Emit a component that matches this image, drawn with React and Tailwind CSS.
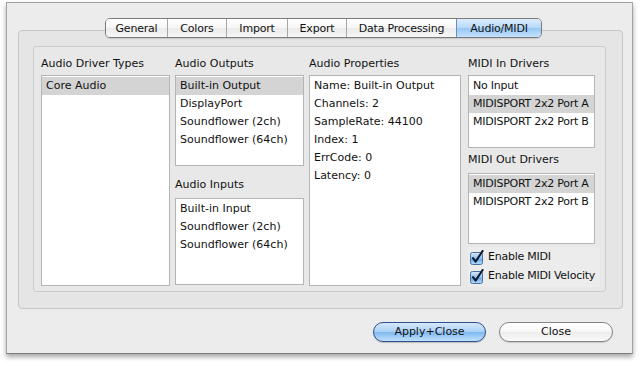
import React from "react";

const tabs = [
  ["General", 62],
  ["Colors", 59],
  ["Import", 61],
  ["Export", 59],
  ["Data Processing", 110],
  ["Audio/MIDI", 85],
];

function ListBox({ items, selected, className }) {
  return (
    <div className={"bg-white border border-[#b5b5b5] pt-[1px] overflow-hidden " + className}>
      {items.map((it, i) => (
        <div
          key={i}
          className={
            "h-[18px] leading-[18px] pl-[4px] whitespace-nowrap " +
            (i === selected ? "bg-[#d4d4d4]" : "")
          }
        >
          {it}
        </div>
      ))}
    </div>
  );
}

function Label({ children, className = "" }) {
  return (
    <div className={"h-[16px] leading-[16px] whitespace-nowrap " + className}>
      {children}
    </div>
  );
}

function Check() {
  return (
    <svg width="14" height="15" viewBox="0 0 14 15" className="shrink-0">
      <defs>
        <linearGradient id="cbg" x1="0" y1="0" x2="0" y2="1">
          <stop offset="0" stopColor="#d6eafd" />
          <stop offset="0.5" stopColor="#8fc2f3" />
          <stop offset="0.55" stopColor="#6aaaea" />
          <stop offset="1" stopColor="#b9ddfb" />
        </linearGradient>
      </defs>
      <rect x="0.5" y="2.5" width="12" height="12" rx="2" fill="url(#cbg)" stroke="#4a6f9c" />
      <path d="M3 8.2 L5.6 11.6 L12.6 1" fill="none" stroke="#0c1a2e" strokeWidth="2.1" strokeLinecap="round" strokeLinejoin="round" />
    </svg>
  );
}

export default function App() {
  return (
    <div className="w-[640px] h-[366px] bg-white overflow-hidden text-[11px] text-[#111] font-['DejaVu_Sans',sans-serif]">
      <div className="ml-[6px] mt-[2px] w-[627px] h-[352px] bg-[#ececec] border border-[#a3a3a3] border-b-[#7c7c7c] shadow-[0_3px_5px_rgba(0,0,0,0.35)] flex flex-col">
        {/* Tabs */}
        <div className="relative z-10 mt-[15px] pl-[98px] flex">
          <div className="flex h-[20px] border border-[#7b7b7b] rounded-[5px] overflow-hidden shadow-[0_1px_1px_rgba(0,0,0,0.12)]">
            {tabs.map(([t, w], i) => {
              const sel = t === "Audio/MIDI";
              return (
                <div
                  key={t}
                  style={{ width: i === 0 ? w - 1 : w }}
                  className={
                    "flex items-center justify-center leading-none tracking-[-0.2px] " +
                    (i > 0 ? "border-l border-[#a6a6a6] " : "") +
                    (sel
                      ? "bg-[linear-gradient(to_bottom,#dcedfd_0%,#b7d8f8_50%,#97c7f4_52%,#c3e2fc_100%)] border-l-[#6f8fb4]"
                      : "bg-[linear-gradient(to_bottom,#ffffff_0%,#f6f6f6_50%,#ebebeb_52%,#f7f7f7_100%)]")
                  }
                >
                  {t}
                </div>
              );
            })}
          </div>
        </div>

        {/* Outer tab box */}
        <div className="-mt-[8px] ml-[11px] w-[605px] h-[279px] bg-[#e5e5e5] border border-[#c6c6c6] rounded-[4px] pt-[15px] pl-[14px]">
          {/* Inner box */}
          <div className="w-[573px] h-[246px] bg-[#e8e8e8] border border-[#cbcbcb] rounded-[3px] pt-[9px] pl-[7px] flex gap-[5px]">
            {/* col 1 */}
            <div className="w-[129px] flex flex-col">
              <Label className="mb-[3px]">Audio Driver Types</Label>
              <ListBox items={["Core Audio"]} selected={0} className="h-[211px]" />
            </div>
            {/* col 2 */}
            <div className="w-[129px] flex flex-col">
              <Label className="mb-[3px]">Audio Outputs</Label>
              <ListBox
                items={["Built-in Output", "DisplayPort", "Soundflower (2ch)", "Soundflower (64ch)"]}
                selected={0}
                className="h-[91px]"
              />
              <Label className="mt-[11px] mb-[5px]">Audio Inputs</Label>
              <ListBox
                items={["Built-in Input", "Soundflower (2ch)", "Soundflower (64ch)"]}
                selected={-1}
                className="h-[87px]"
              />
            </div>
            {/* col 3 */}
            <div className="w-[152px] flex flex-col">
              <Label className="mb-[3px]">Audio Properties</Label>
              <ListBox
                items={[
                  "Name: Built-in Output",
                  "Channels: 2",
                  "SampleRate: 44100",
                  "Index: 1",
                  "ErrCode: 0",
                  "Latency: 0",
                ]}
                selected={-1}
                className="h-[211px]"
              />
            </div>
            {/* col 4 */}
            <div className="w-[132px] ml-[2px] flex flex-col">
              <Label className="mb-[3px]">MIDI In Drivers</Label>
              <ListBox
                items={["No Input", "MIDISPORT 2x2 Port A", "MIDISPORT 2x2 Port B"]}
                selected={1}
                className="w-[127px] h-[73px] tracking-[-0.25px]"
              />
              <Label className="mt-[4px] mb-[5px]">MIDI Out Drivers</Label>
              <ListBox
                items={["MIDISPORT 2x2 Port A", "MIDISPORT 2x2 Port B"]}
                selected={0}
                className="w-[127px] h-[71px] tracking-[-0.25px]"
              />
              <div className="mt-[3px] h-[40px] bg-[#ececec] flex flex-col pl-[2px] pt-[1px] tracking-[-0.25px] whitespace-nowrap">
                <div className="h-[19px] flex items-center gap-[4px]">
                  <Check />
                  <span>Enable MIDI</span>
                </div>
                <div className="h-[19px] flex items-center gap-[4px]">
                  <Check />
                  <span>Enable MIDI Velocity</span>
                </div>
              </div>
            </div>
          </div>
        </div>

        {/* Buttons */}
        <div className="mt-[13px] pr-[19px] flex justify-end gap-[13px]">
          <div className="w-[113px] h-[20px] rounded-full border border-[#2d4f8c] bg-[linear-gradient(to_bottom,#d6e9fc_0%,#a9d0f7_50%,#80b9f0_52%,#bfe2fd_100%)] flex items-center justify-center shadow-[0_1px_1px_rgba(0,0,0,0.2)]">
            Apply+Close
          </div>
          <div className="w-[114px] h-[20px] rounded-full border border-[#858585] bg-[linear-gradient(to_bottom,#ffffff_0%,#f7f7f7_50%,#ececec_52%,#fafafa_100%)] flex items-center justify-center shadow-[0_1px_1px_rgba(0,0,0,0.15)]">
            Close
          </div>
        </div>
      </div>
    </div>
  );
}
